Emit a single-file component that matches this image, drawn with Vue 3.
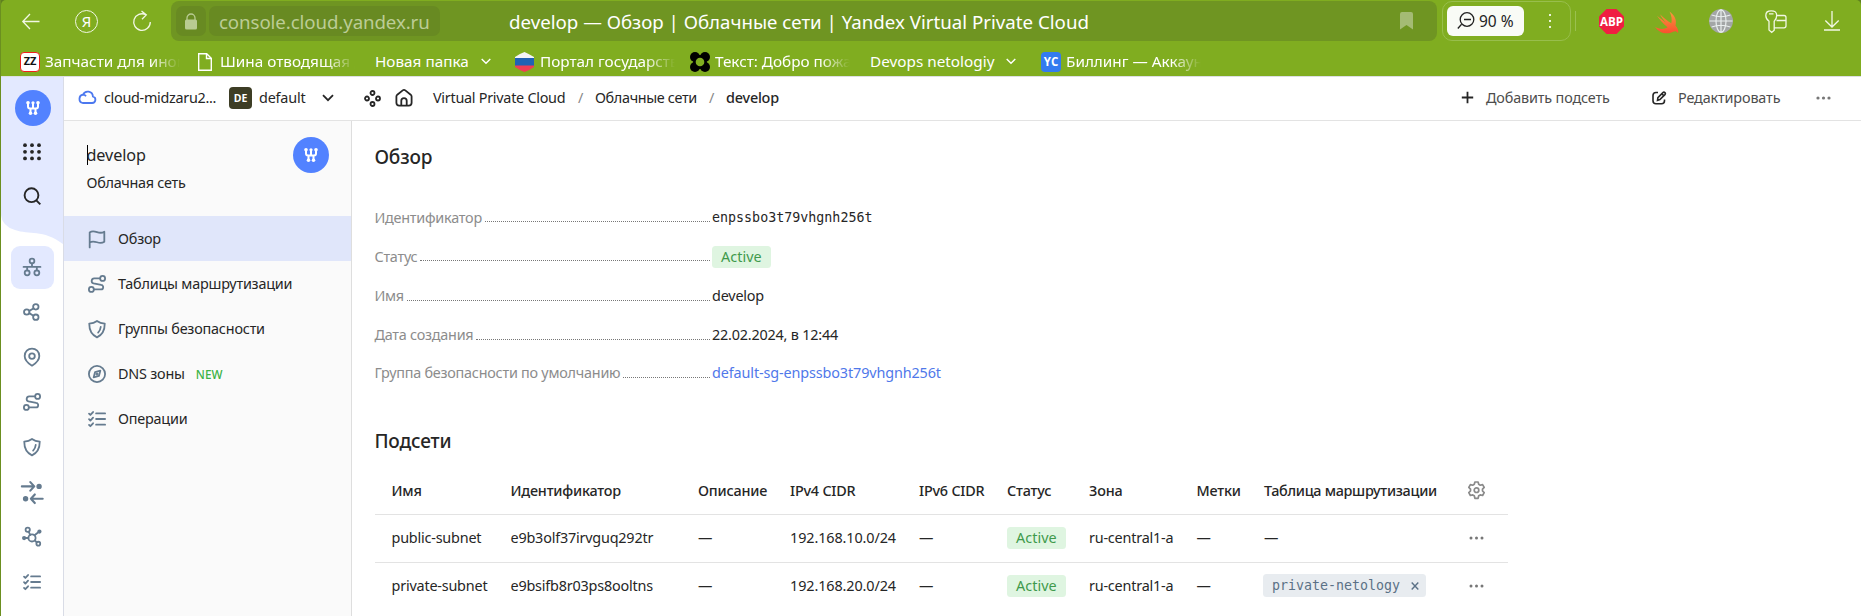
<script setup>
const bookmarks = [
  { icon: 'zz', text: 'Запчасти для ином', cls: 'b1', fade: true },
  { icon: 'file', text: 'Шина отводящая д', cls: 'b2', fade: true },
  { text: 'Новая папка', cls: 'b3', folder: true },
  { icon: 'flag', text: 'Портал государств', cls: 'b4', fade: true },
  { icon: 'flower', text: 'Текст: Добро пожа', cls: 'b5', fade: true },
  { text: 'Devops netologiy', cls: 'b6', folder: true },
  { icon: 'yc', text: 'Биллинг — Аккаун', cls: 'b7', fade: true },
]

const icons = {
  flag: '<path d="M1.500 15.500V2.200M1.500 2.200c2-1.500 4.300-1 6.500-.3s4.500.9 6.500-.4v9c-2 1.300-4.300 1.100-6.500.4s-4.500-1.200-6.500.3"/>',
  route: '<circle cx="13" cy="3" r="2.200"/><circle cx="3" cy="12.800" r="2.200"/><path d="M10.800 3H5.500a2.300 2.300 0 0 0-.6 4.500l6.800 1.300a2 2 0 0 1-.4 4H5.200"/>',
  shield: '<path d="M8 .9c2 1.400 4.300 2.100 6.900 2.300 0 5.800-1.400 9.800-6.900 12.200C2.500 13 1.100 9 1.100 3.200 3.700 3 6 2.300 8 .9z"/><path d="M11.300 6.200c-.2 2-.8 3.500-2.300 5"/>',
  compass: '<circle cx="8" cy="8" r="7.200"/><path d="M11 5L9.700 9.700 5 11l1.300-4.700z"/><circle cx="8" cy="8" r=".6"/>',
  list: '<path d="M7.200 3h8M7.200 8h8M7.200 13h8M.9 3.200l1.200 1.200L4.500 1.800M.9 8.200l1.200 1.200 2.400-2.600M.9 13.200l1.200 1.200 2.400-2.600"/>',
  network: '<circle cx="8" cy="2.600" r="2.100"/><circle cx="3.700" cy="13.200" r="2.200"/><circle cx="12.300" cy="13.200" r="2.200"/><path d="M.5 7.900h15M8 4.700v3.200M3.700 7.900V11M12.300 7.900V11"/>',
  share: '<circle cx="3.300" cy="8" r="2.400"/><circle cx="11.400" cy="3.400" r="2.400"/><circle cx="11.400" cy="12.600" r="2.400"/><path d="M5.600 7l3.600-2.100M5.600 9l3.600 2.300"/>',
  pin: '<path d="M8 15.700c3-1.900 6.500-4.900 6.500-8.700a6.500 6.500 0 0 0-13 0c0 3.800 3.500 6.800 6.500 8.700z"/><circle cx="8" cy="7.200" r="2.500"/>',
  arrows: '<g stroke-width="1.900"><path d="M-1 3h10.500M6.500-.8L10 3 6.500 6.800M17.500 14H7M10.500 10.200L7 14l3.500 3.800"/></g><circle cx="14.300" cy="3" r="1.600" fill="currentColor"/><circle cx="2.300" cy="14" r="1.600" fill="currentColor"/>',
  graph: '<circle cx="8" cy="8.800" r="3.200"/><circle cx="4.200" cy="1.600" r="1.900"/><circle cx="13.600" cy="13.900" r="1.700"/><circle cx="14.600" cy="3.200" r="1.100" fill="currentColor"/><circle cx="1" cy="8.900" r="1.100" fill="currentColor"/><path d="M5 3.300l1.400 2.900M10.300 6.500l3.600-3M4.800 8.900H1.500M10.400 11.100l1.900 1.600"/>',
}
const rail = ['network', 'share', 'pin', 'route', 'shield', 'arrows', 'graph', 'list']
const menu = [
  { icon: 'flag', text: 'Обзор', active: true },
  { icon: 'route', text: 'Таблицы маршрутизации' },
  { icon: 'shield', text: 'Группы безопасности' },
  { icon: 'compass', text: 'DNS зоны', tag: 'NEW' },
  { icon: 'list', text: 'Операции' },
]
const details = [
  { label: 'Идентификатор', value: 'enpssbo3t79vhgnh256t', kind: 'mono' },
  { label: 'Статус', value: 'Active', kind: 'badge' },
  { label: 'Имя', value: 'develop', kind: 'plain' },
  { label: 'Дата создания', value: '22.02.2024, в 12:44', kind: 'plain' },
  { label: 'Группа безопасности по умолчанию', value: 'default-sg-enpssbo3t79vhgnh256t', kind: 'link' },
]
const columns = ['Имя', 'Идентификатор', 'Описание', 'IPv4 CIDR', 'IPv6 CIDR', 'Статус', 'Зона', 'Метки', 'Таблица маршрутизации']
const subnets = [
  { name: 'public-subnet', id: 'e9b3olf37irvguq292tr', cidr: '192.168.10.0/24', table: '' },
  { name: 'private-subnet', id: 'e9bsifb8r03ps8ooltns', cidr: '192.168.20.0/24', table: 'private-netology' },
]
const logo = '<path d="M2 2v3.500q0 2 2 2h6q2 0 2-2V2M7 2v5.500M4.500 7.500v4.700M9.500 7.500v4.700"/><g fill="#fff" stroke="none"><circle cx="2" cy="1.800" r="1.800"/><circle cx="7" cy="1.800" r="1.600"/><circle cx="12" cy="1.800" r="1.800"/><circle cx="4.500" cy="12.200" r="1.800"/><circle cx="9.500" cy="12.200" r="1.800"/></g>'
</script>

<template>
  <div class="window">
    <header class="chrome">
      <div class="toolbar">
        <svg class="back" width="18" height="17" viewBox="0 0 18 17"><path d="M17.500 8.500H1M8 1L.8 8.500 8 16" /></svg>
        <span class="ya">Я</span>
        <svg class="reload" width="20" height="23" viewBox="0 0 20 23"><path d="M13.800 4.700A8.300 8.300 0 1 0 18.300 12M9.500 1l4.800 3.900L10 9.300" /></svg>
        <div class="address">
          <span class="lock"><svg width="14" height="17" viewBox="0 0 14 17"><path d="M3 7V5a4 4 0 0 1 8 0v2" fill="none" stroke="#b9cb92" stroke-width="1.300" /><rect x="1" y="6.500" width="12" height="10" rx="1.500" fill="#b9cb92" /></svg></span>
          <span class="host">console.cloud.yandex.ru</span>
          <span class="title">develop — Обзор | Облачные сети | Yandex Virtual Private Cloud</span>
          <svg class="mark" width="13" height="18" viewBox="0 0 13 18"><path d="M0 2q0-2 2-2h9q2 0 2 2v15.500L6.500 13 0 17.500z" /></svg>
        </div>
        <div class="zoombox">
          <span class="zoom"><svg width="18" height="18" viewBox="0 0 18 18"><path d="M4.600 12.300L.8 16.500M7 7.500h7" /><circle cx="10" cy="7.500" r="6.800" /></svg>90 %</span>
          <svg class="kebab" width="3" height="15" viewBox="0 0 3 15"><path d="M0 0h2v2H0zM0 6h2v2H0zM0 12h2v2H0z" fill="#eaf3d8" /></svg>
        </div>
        <i class="sep"></i>
        <svg class="abp" width="25" height="25" viewBox="0 0 25 25"><path d="M7.500 0h10L25 7.500v10L17.500 25h-10L0 17.500v-10z" fill="#f01e42" /><text x="12.500" y="17" text-anchor="middle" textLength="23" lengthAdjust="spacingAndGlyphs">ABP</text></svg>
        <svg class="swift" width="24" height="23" viewBox="0 0 24 23"><defs><linearGradient id="sw" x2="0" y2="1"><stop offset="0" stop-color="#f99a3c" /><stop offset="1" stop-color="#f9502f" /></linearGradient></defs><path d="M14.500.5C19.500 4 22 9 20.500 14.500 23 17.500 23.800 20 23 22 21.500 20 20 19.800 18 20.800 12 23.800 4.500 22.500 0 15.800 4 18.300 9 18.700 12.500 16.300 8 12.800 4.500 8.500 2 4.800 5.500 7.600 8.500 10 11 11.500 8.800 9.200 6.500 6.200 5 3.200 8.800 7 12.500 9.800 16.300 12.300 17.200 8.500 16.500 4.500 14.500.5z" fill="url(#sw)" /></svg>
        <svg class="globe" width="24" height="24" viewBox="0 0 24 24"><circle cx="12" cy="12" r="12" fill="#a3a6a6" stroke="none" /><g fill="none" stroke="#e9eeee" stroke-width="1.200"><ellipse cx="12" cy="12" rx="5" ry="11.200" /><path d="M12 .5v23M.5 12h23M2.600 6q9.400 3.500 18.800 0M2.600 18q9.400-3.500 18.800 0" /></g></svg>
        <svg class="keys" width="23" height="23" viewBox="0 0 23 23"><path d="M11.500 5.500H19a2 2 0 0 1 2 2v8.300a2 2 0 0 1-2 2H9.500M11.500 10.500H21M4 11.200Q.8 9 .8 5.500C.8 2 2.500.8 6.200.8s5.500 1.200 5.500 4.700Q11.700 9 9.200 11.200v9L6.700 22.400 4 20zM4 3.800h4.500" /></svg>
        <svg class="down" width="16" height="20" viewBox="0 0 16 20"><path d="M8 0v15.500M1.300 9.500L8 16l6.700-6.500M0 19h16" /></svg>
      </div>
      <nav class="bookmarks">
        <div v-for="b in bookmarks" :key="b.text" class="bm" :class="b.cls">
          <span v-if="b.icon === 'zz'" class="ic zz">ZZ</span>
          <svg v-if="b.icon === 'file'" class="file" width="14" height="18" viewBox="0 0 14 18"><path d="M.7.7h8l4.600 4.600v12H.7zM8.500 1v4.500H13" /></svg>
          <svg v-if="b.icon === 'flag'" class="gos" width="19" height="20" viewBox="0 0 19 20"><clipPath id="hex"><path d="M9.500 0Q13 1.500 19 5v10q-5 3.500-9.500 5Q5 18.500 0 15V5Q5 1.500 9.500 0z" /></clipPath><g clip-path="url(#hex)"><path d="M0 0h19v7H0z" fill="#f4f4f6" /><path d="M0 6h19v8H0z" fill="#1f62b4" /><path d="M0 13.500h19V20H0z" fill="#ef3d55" /></g></svg>
          <svg v-if="b.icon === 'flower'" width="20" height="20" viewBox="0 0 20 20"><g fill="#000"><path d="M5 3h10l2 7-2 7H5l-2-7z" /><circle cx="5" cy="5" r="5" /><circle cx="15" cy="5" r="5" /><circle cx="5" cy="15" r="5" /><circle cx="15" cy="15" r="5" /></g><circle cx="10" cy="10" r="4.300" fill="#80ad20" /></svg>
          <span v-if="b.icon === 'yc'" class="ic yc">YC</span>
          <span class="bt" :class="{ fade: b.fade }">{{ b.text }}</span>
          <svg v-if="b.folder" class="chev" width="10" height="7" viewBox="0 0 10 7"><path d="M.7 1L5 5.300 9.300 1" /></svg>
        </div>
      </nav>
    </header>

    <div class="page">
      <aside class="rail">
        <svg class="wave" width="62" height="168" viewBox="0 0 62 168"><path d="M0 0h62v167C42 152 28 158 14 153Q1 149 0 138z" fill="#e3e9ff" /></svg>
        <div class="railtop">
          <span class="logo"><svg width="14" height="14" viewBox="0 0 14 14" v-html="logo"></svg></span>
          <svg class="dots9" width="18" height="18" viewBox="0 0 18 18"><g fill="#262626"><template v-for="y in 3" :key="y"><circle v-for="x in 3" :key="x" :cx="x * 7 - 5" :cy="y * 6.600 - 4.400" r="1.900" /></template></g></svg>
          <svg class="search" width="19" height="19" viewBox="0 0 19 19"><circle cx="8.500" cy="8.200" r="6.900" /><path d="M13.300 13.300l4 4" /></svg>
        </div>
        <div class="railitems">
          <span v-for="(n, i) in rail" :key="n" class="ri" :class="{ on: i === 0 }"><svg class="ico" width="18" height="18" viewBox="0 0 16 16" v-html="icons[n]"></svg></span>
        </div>
      </aside>

      <div class="content">
        <div class="topbar">
          <svg class="cloud" width="18" height="14" viewBox="0 0 18 14"><path d="M4.700 13h9.300a3.300 3.300 0 0 0 .9-6.500A5.200 5.200 0 0 0 5 4.600 4.300 4.300 0 0 0 4.700 13zM5 4.700q2 .1 3 1.500" /></svg>
          <span class="cname">cloud-midzaru2...</span>
          <span class="de">DE</span>
          <span class="dname">default</span>
          <svg class="arr" width="12" height="8" viewBox="0 0 12 8"><path d="M1 1.200l5 5 5-5" /></svg>
          <svg class="four" width="17" height="17" viewBox="0 0 17 17"><circle cx="8.500" cy="3" r="2" /><circle cx="3" cy="8.500" r="2" /><circle cx="14" cy="8.500" r="2" /><circle cx="8.500" cy="14" r="2" /></svg>
          <svg class="home" width="18" height="18" viewBox="0 0 18 18"><path d="M1.400 7.600Q1.400 6.500 2.300 5.700L7.700 1.400q1.300-1 2.600 0l5.400 4.300q.9.800.9 1.900v6.200q0 2.800-2.800 2.800H4.200q-2.800 0-2.800-2.800zM6.300 16.300v-4.500a2.700 2.700 0 0 1 5.400 0v4.500" /></svg>
          <span class="vpc">Virtual Private Cloud</span><i class="slash">/</i>
          <span class="nets">Облачные сети</span><i class="slash">/</i>
          <b class="cur">develop</b>
          <div class="actions">
            <svg class="plus" width="13" height="13" viewBox="0 0 13 13"><path d="M6.500 .8v11.400M.8 6.500h11.400" /></svg>
            <span class="add">Добавить подсеть</span>
            <svg class="edit" width="15" height="14" viewBox="0 0 15 14"><path d="M6 1.500H4Q1 1.500 1 4.500v5.300q0 3 3 3h5.500q3 0 3-3V8.500M5.500 9.300l.4-2.700 5-5q1-.9 2 0t0 2l-5 5zM9.700 2.800l2 2" /></svg>
            <span class="ed">Редактировать</span>
            <svg class="more" width="15" height="4" viewBox="0 0 15 4"><circle cx="2" cy="2" r="1.600" /><circle cx="7.500" cy="2" r="1.600" /><circle cx="13" cy="2" r="1.600" /></svg>
          </div>
        </div>

        <div class="body">
          <aside class="side">
            <div class="sidehead">
              <div class="names"><p class="n1">develop</p><p class="n2">Облачная сеть</p></div>
              <span class="logo"><svg width="14" height="14" viewBox="0 0 14 14" v-html="logo"></svg></span>
            </div>
            <div v-for="m in menu" :key="m.text" class="item" :class="{ active: m.active }">
              <svg class="ico" width="18" height="18" viewBox="0 0 16 16" v-html="icons[m.icon]"></svg>
              <span>{{ m.text }}</span><em v-if="m.tag">{{ m.tag }}</em>
            </div>
          </aside>

          <main>
            <h2 class="h1">Обзор</h2>
            <dl>
              <div v-for="(d, i) in details" :key="d.label" class="row" :class="'r' + i">
                <dt><span>{{ d.label }}</span><i></i></dt>
                <dd :class="d.kind">{{ d.value }}</dd>
              </div>
            </dl>
            <h2 class="h2">Подсети</h2>
            <div class="table">
              <div class="tr th">
                <span v-for="c in columns" :key="c">{{ c }}</span>
                <svg class="gear" width="17" height="19" viewBox="0 0 17 19"><path d="M6.900 1h3.200l.6 2.300 1.600.9 2.300-.6 1.600 2.800-1.700 1.700v1.900l1.700 1.700-1.600 2.800-2.300-.6-1.600.9-.6 2.500H6.900l-.6-2.500-1.600-.9-2.300.6-1.600-2.800L2.500 10V8.100L.8 6.400l1.600-2.800 2.300.6 1.600-.9z" /><circle cx="8.500" cy="9.200" r="2.300" /></svg>
              </div>
              <div v-for="s in subnets" :key="s.id" class="tr td">
                <span>{{ s.name }}</span><span>{{ s.id }}</span><span>—</span><span class="ip">{{ s.cidr }}</span><span>—</span>
                <span class="badge">Active</span><span>ru-central1-a</span><span>—</span>
                <span v-if="s.table" class="chip">{{ s.table }}<svg width="8" height="8" viewBox="0 0 8 8"><path d="M.7.5l6.600 7M7.300.5l-6.600 7" /></svg></span>
                <span v-else>—</span>
                <svg class="dots" width="15" height="4" viewBox="0 0 15 4"><circle cx="2" cy="2" r="1.500" /><circle cx="7.500" cy="2" r="1.500" /><circle cx="13" cy="2" r="1.500" /></svg>
              </div>
            </div>
          </main>
        </div>
      </div>
    </div>
  </div>
</template>

<style>
body { margin: 0; background: #fff; overflow: hidden; }
</style>

<style scoped>
* { box-sizing: border-box; }
svg { flex: none; fill: none; overflow: visible; }
span, b, i, dt, dd { flex: none; white-space: nowrap; }
p, h2, dl, dd { margin: 0; }
.window { height: 616px; display: flex; flex-direction: column; border-left: 1px solid #6b8f20; font: 14.4px/20px "Noto Sans", "Open Sans", sans-serif; letter-spacing: -.2px; color: #262626; background: linear-gradient(#5f8020 12px, #fff 12px); }
.chrome { height: 76px; background: #80ad20; color: #fff; letter-spacing: 0; flex: none; border-radius: 5px 5px 0 0; }
.toolbar { height: 42px; display: flex; align-items: center; padding-left: 21px; }
.toolbar svg { stroke: #f1f7e4; stroke-width: 1.300; }
.ya { width: 23px; height: 23px; margin-left: 35px; border: 1.300px solid #f1f7e4; border-radius: 50%; font-size: 15px; line-height: 20px; text-align: center; }
.reload { margin-left: 34px; }
.address { margin-left: 19px; width: 1266px; height: 40px; border-radius: 8px; background: #6f9522; display: flex; align-items: center; padding-left: 5px; font-size: 18.700px; }
.lock { width: 30px; height: 30px; border-radius: 7px; background: #688a22; display: flex; align-items: center; justify-content: center; }
.lock svg { stroke: none; }
.host { margin-left: 3px; width: 231px; height: 30px; line-height: 31px; padding-left: 10px; border-radius: 7px; background: #688a22; color: #bccd96; letter-spacing: -.1px; }
.title { margin-left: 69px; width: 891px; line-height: 31px; }
.address .mark { fill: #a4bb74; stroke: none; }
.zoombox { margin-left: 5px; width: 129px; height: 40px; border: 1px solid #98be4c; border-radius: 10px; display: flex; align-items: center; padding-left: 4px; }
.zoom { width: 77px; height: 30px; border-radius: 6px; background: #f9fbf6; color: #222; font-size: 15.500px; display: flex; align-items: center; gap: 4px; padding-left: 10px; }
.zoom svg { stroke: #222; }
.toolbar .kebab { margin-left: 25px; stroke: none; }
.sep { margin-left: 4px; width: 1px; height: 20px; background: #9ac04f; }
.toolbar .abp { margin-left: 23px; stroke: none; }
.abp text { font: bold 12px "Open Sans", sans-serif; fill: #fff; }
.toolbar .swift { margin-left: 31px; margin-top: 2px; stroke: none; }
.globe { margin-left: 30px; }
.keys { margin-left: 32px; }
.down { margin-left: 36px; }
.bookmarks { display: flex; align-items: center; height: 39px; padding-left: 19px; font-size: 15.300px; }
.bm { display: flex; align-items: center; flex: none; height: 22px; }
.b1 { width: 178px; } .b2 { width: 177px; } .b3 { width: 140px; } .b4 { width: 175px; } .b5 { width: 180px; } .b6 { width: 171px; }
.bt { margin: -1px 0 1px 5px; line-height: 24px; }
.b2 .bt { margin-left: 8px; } .b3 .bt, .b6 .bt { margin-left: 0; } .b4 .bt { margin-left: 6px; }
.fade { width: 145px; margin-right: -10px; -webkit-mask-image: linear-gradient(90deg, #000 105px, transparent 135px); mask-image: linear-gradient(90deg, #000 105px, transparent 135px); }
.file, .chev { stroke: #fff; stroke-width: 1.400; }
.chev { margin-left: 12px; }
.ic { width: 20px; height: 20px; border-radius: 4px; text-align: center; font: bold 11px/16px "Open Sans", sans-serif; }
.zz { background: #fff; border: 1.500px solid #f0201c; color: #111; }
.yc { background: #337bf0; font-size: 11.500px; line-height: 20px; }

.page { flex: 1; display: flex; min-height: 0; border-top: 1px solid #dcdfe3; background: #fff; }
.rail { width: 63px; border-right: 1px solid #d9dce6; display: grid; flex: none; }
.wave, .railtop, .railitems { grid-area: 1 / 1; }
.railtop { display: flex; flex-direction: column; align-items: center; padding: 13px 0 0 2px; height: 135px; }
.logo { width: 36px; height: 36px; border-radius: 50%; background: #5282ff; display: flex; align-items: center; justify-content: center; }
.logo svg { stroke: #fff; stroke-width: 2; }
.dots9 { margin-top: 17px; margin-right: 2px; }
.search { margin-top: 26px; margin-right: 2px; stroke: #262626; stroke-width: 1.900; }
.railitems { padding: 169px 0 0 10px; display: flex; flex-direction: column; gap: 2px; }
.ri { width: 43px; height: 43px; border-radius: 9px; display: flex; align-items: center; justify-content: center; padding: 0 1.500px 1.500px 0; }
.on { background: #e3e9ff; }
.ico { color: #657b8f; stroke: currentColor; stroke-width: 1.600; stroke-linecap: round; stroke-linejoin: round; }

.content { flex: 1; min-width: 0; display: flex; flex-direction: column; }
.topbar { height: 44px; flex: none; border-bottom: 1px solid #e3e3e3; display: flex; align-items: center; padding: 0 30px 2px 14px; }
.topbar svg { stroke: #262626; stroke-width: 1.800; }
.topbar .cloud { stroke: #4c78ef; margin-top: -1px; }
.cname { margin-left: 8px; width: 125px; letter-spacing: -.3px; }
.de { width: 23px; height: 22px; border-radius: 4px; background: #3d3d25; color: #fff; font: bold 10.500px/23px "Open Sans", sans-serif; letter-spacing: -.2px; text-align: center; margin-top: 1px; }
.dname { margin-left: 7px; width: 63px; }
.arr { margin-top: 1px; }
.four { margin-left: 30px; margin-top: 1px; } .home { margin-left: 14px; margin-top: 1px; }
.vpc { margin-left: 20px; width: 145px; letter-spacing: -.27px; }
.slash { width: 17px; font-style: normal; color: #888; }
.nets { width: 114px; letter-spacing: -.34px; }
.cur { font-weight: 500; }
.actions { margin-left: auto; display: flex; align-items: center; color: #4d4d4d; }
.add { margin-left: 12px; width: 166px; letter-spacing: -.15px; }
.ed { margin-left: 11px; width: 138px; letter-spacing: -.14px; }
.topbar .edit { stroke-width: 1.600; }
.topbar .more, .dots { fill: #777; stroke: none; }
.more { margin-top: 1px; }

.body { flex: 1; display: flex; min-height: 0; }
.side { width: 288px; background: #fafafa; border-right: 1px solid #dedede; flex: none; }
.sidehead { height: 95px; padding: 16px 22px 0 22.500px; display: flex; justify-content: space-between; }
.names { padding-top: 8px; }
.n1 { font-size: 16.200px; line-height: 20px; border-left: 1px solid #000; text-indent: -1px; letter-spacing: -.1px; margin-bottom: 8px; }
.n2 { letter-spacing: -.28px; }
.item { height: 45px; display: flex; align-items: center; gap: 12px; padding-left: 24px; }
.active { background: #e0e6fa; }
.item em { font: 500 11.700px/16px "Noto Sans", sans-serif; letter-spacing: .1px; color: #3bb346; margin-top: 1px; margin-left: -1px; }

main { flex: 1; padding-left: 23px; }
.h1, .h2 { font-size: 19px; line-height: 26px; font-weight: 500; letter-spacing: -.15px; margin-left: -.6px; }
.h1 { margin-top: 23px; }
dl { margin-top: 28px; }
.row { display: flex; align-items: center; height: 39px; }
.r1 { height: 39.500px; } .r4 { height: 37.500px; }
dt { width: 337px; display: flex; color: #8c8c8c; letter-spacing: -.24px; }
dt span { margin-left: -.6px; }
dt i { flex: 1; height: 14.500px; margin: 0 2px 0 3px; border-bottom: 1px dotted #777; }
dd { color: #262626; }
.mono { font: 13.330px/20px "DejaVu Sans Mono", monospace; letter-spacing: 0; }
.badge { height: 22px; background: #dff5e1; color: #3f9a4c; border-radius: 3.500px; width: 59px; padding-left: 9px; line-height: 22px; letter-spacing: .05px; }
.link { color: #5078ea; letter-spacing: -.12px; }
.h2 { margin-top: 36px; }
.table { width: 1133px; margin-top: 13px; }
.tr { height: 48px; border-bottom: 1px solid #e3e3e3; display: grid; grid-template-columns: 119px 187.500px 92px 129px 88px 82px 107.500px 67.500px 204px 1fr; align-items: center; padding-left: 16.500px; }
.td { padding-bottom: 1.500px; }
.tr:last-child { border-bottom: 0; padding-bottom: 2.500px; }
.th { font-weight: 500; }
.th span:last-of-type { letter-spacing: -.3px; }
.ip { letter-spacing: -.1px; }
.gear { stroke: #8a8a8a; stroke-width: 1.700; stroke-linejoin: round; }
.dots { margin-left: .5px; }
.chip { height: 23px; width: 163px; margin-left: -1px; border-radius: 3.500px; background: #e8ecf0; color: #5b7186; font: 13.300px/22px "DejaVu Sans Mono", monospace; letter-spacing: 0; padding-left: 9px; display: flex; align-items: center; gap: 11px; }
.chip svg { stroke: #5b7186; stroke-width: 1.400; }
</style>
